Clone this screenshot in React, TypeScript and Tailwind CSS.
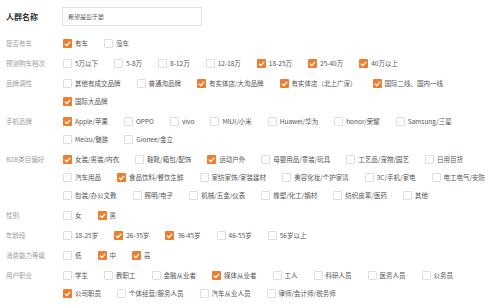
const font = "font-['Noto_Sans_CJK_SC','Noto_Sans',sans-serif]"

type Opt = [string, boolean]

const groups: { label: string; lines: Opt[][] }[] = [
  { label: "是否有车", lines: [[["有车", true], ["没车", false]]] },
  {
    label: "预测购车档次",
    lines: [
      [
        ["5万以下", false],
        ["5-8万", false],
        ["8-12万", false],
        ["12-18万", false],
        ["18-25万", true],
        ["25-40万", true],
        ["40万以上", true],
      ],
    ],
  },
  {
    label: "品牌调性",
    lines: [
      [
        ["其他有成交品牌", false],
        ["普通淘品牌", false],
        ["有实体店/大淘品牌", true],
        ["有实体店（北上广深）", true],
        ["国际二线、国内一线", true],
      ],
      [["国际大品牌", true]],
    ],
  },
  {
    label: "手机品牌",
    lines: [
      [
        ["Apple/苹果", true],
        ["OPPO", false],
        ["vivo", false],
        ["MIUI/小米", false],
        ["Huawei/华为", false],
        ["honor/荣耀", false],
        ["Samsung/三星", false],
      ],
      [
        ["Meizu/魅族", false],
        ["Gionee/金立", false],
      ],
    ],
  },
  {
    label: "B2B类目偏好",
    lines: [
      [
        ["女装/男装/内衣", true],
        ["鞋靴/箱包/配饰", false],
        ["运动户外", true],
        ["母婴用品/童装/玩具", false],
        ["工艺品/宠物/园艺", false],
        ["日用百货", false],
      ],
      [
        ["汽车用品", false],
        ["食品饮料/餐饮生鲜", true],
        ["家纺家饰/家装建材", false],
        ["美容化妆/个护家清", false],
        ["3C/手机/家电", false],
        ["电工电气/安防", false],
      ],
      [
        ["包装/办公文教", false],
        ["照明/电子", false],
        ["机械/五金/仪表", false],
        ["橡塑/化工/钢材", false],
        ["纺织皮革/医药", false],
        ["其他", false],
      ],
    ],
  },
  { label: "性别", lines: [[["女", false], ["男", true]]] },
  {
    label: "年龄段",
    lines: [
      [
        ["18-25岁", false],
        ["26-35岁", true],
        ["36-45岁", true],
        ["46-55岁", false],
        ["56岁以上", false],
      ],
    ],
  },
  { label: "消费能力等级", lines: [[["低", false], ["中", true], ["高", true]]] },
  {
    label: "用户职业",
    lines: [
      [
        ["学生", false],
        ["教职工", false],
        ["金融从业者", false],
        ["媒体从业者", true],
        ["工人", false],
        ["科研人员", false],
        ["医务人员", false],
        ["公务员", false],
      ],
      [
        ["公司职员", true],
        ["个体经营/服务人员", false],
        ["汽车从业人员", false],
        ["律师/会计师/税务师", false],
      ],
    ],
  },
]

function Box({ checked }: { checked: boolean }) {
  if (checked) {
    return (
      <span className="w-[9px] h-[9px] shrink-0 rounded-[1px] bg-[#f07c2e] flex items-center justify-center">
        <svg width="9" height="9" viewBox="0 0 10 10">
          <path d="M2.2 5.2 L4.3 7.2 L8 3.2" fill="none" stroke="#fff" strokeWidth="1.5" />
        </svg>
      </span>
    )
  }
  return <span className="w-[9px] h-[9px] shrink-0 rounded-[1px] border border-[#dedede] bg-white" />
}

export default function App() {
  return (
    <div className={`w-[500px] h-[308px] bg-white pt-[7px] pl-[6px] overflow-hidden ${font}`}>
      {/* name */}
      <div className="flex items-center h-[19px]">
        <div className="w-[56px] text-[8px] font-bold text-[#333] leading-none">人群名称</div>
        <div className="w-[140px] h-[19px] border border-[#e3e3e3] flex items-center px-[5px] text-[6px] text-[#555] leading-none">
          希望是彭于晏
        </div>
      </div>

      {/* filters */}
      <div className="mt-[8px] flex flex-col gap-[2px]">
        {groups.map((g) => (
          <div key={g.label} className="flex">
            <div className="w-[57px] h-[18px] flex items-center text-[6.5px] text-[#a0a0a0] leading-none">
              {g.label}
            </div>
            <div className="flex flex-col">
              {g.lines.map((line, i) => (
                <div key={i} className="h-[18px] flex items-center gap-[16px]">
                  {line.map(([text, checked]) => (
                    <label key={text} className="flex items-center gap-[3px] text-[6.5px] text-[#555] leading-none whitespace-nowrap">
                      <Box checked={checked} />
                      {text}
                    </label>
                  ))}
                </div>
              ))}
            </div>
          </div>
        ))}
      </div>
    </div>
  )
}
